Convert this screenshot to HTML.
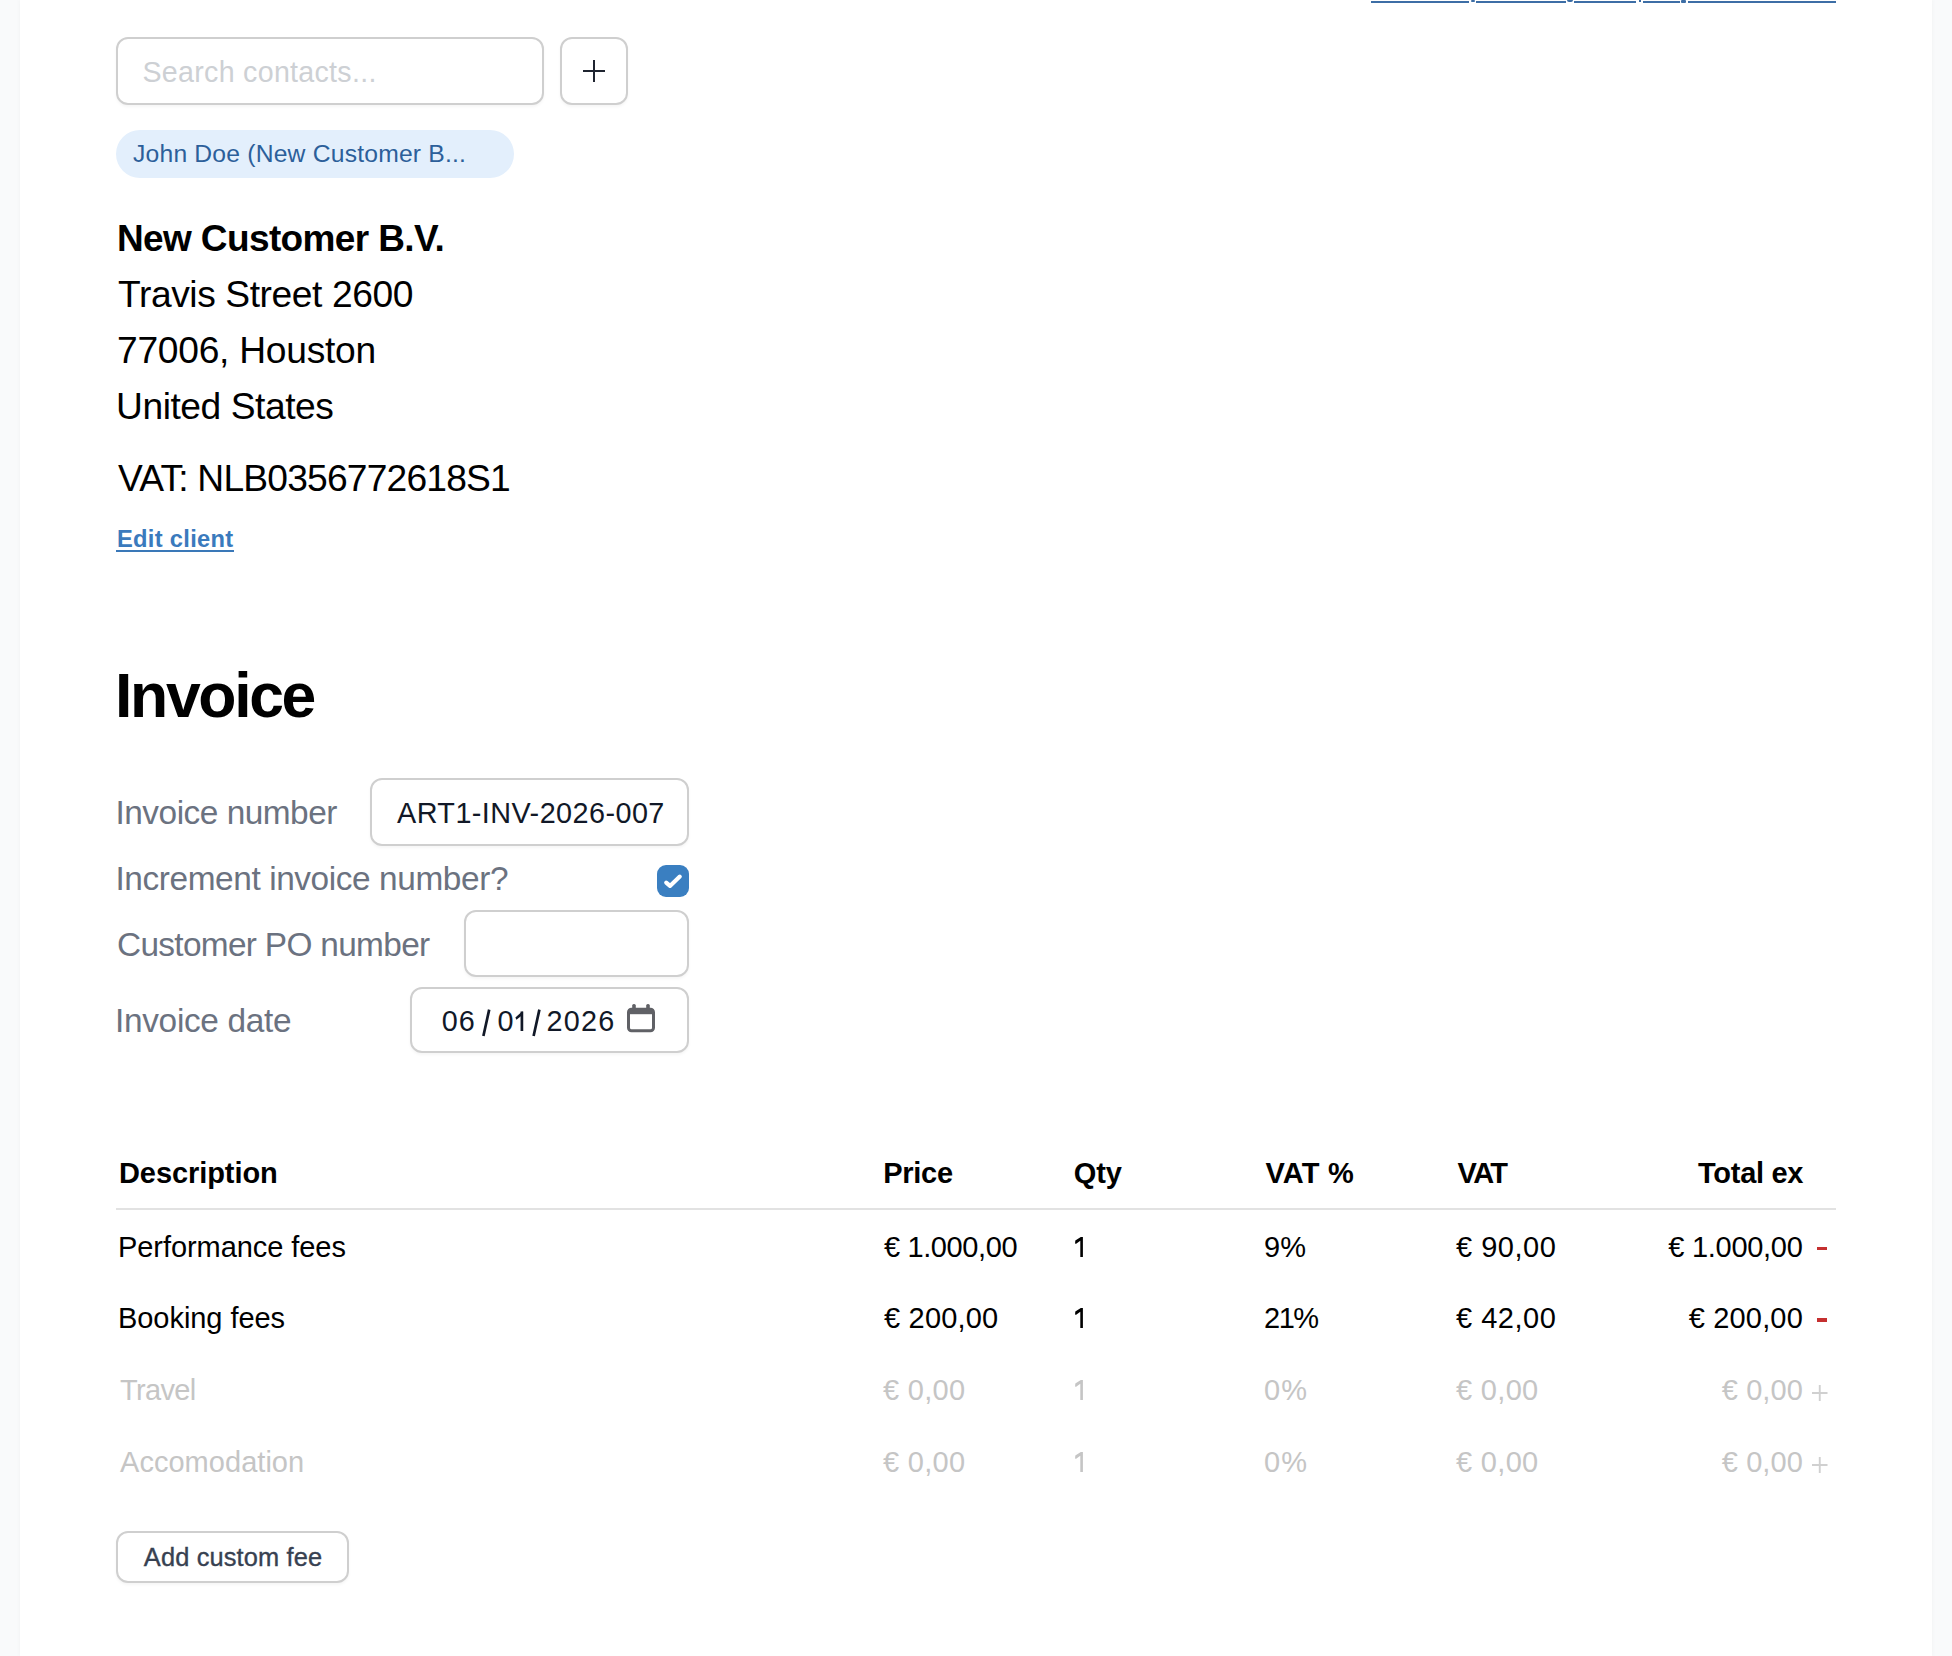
<!DOCTYPE html>
<html><head><meta charset="utf-8"><title>Invoice</title>
<style>
html,body{margin:0;padding:0;}
body{width:1952px;height:1656px;overflow:hidden;background:#f9fafb;position:relative;font-family:"Liberation Sans",sans-serif;}
.card{position:absolute;left:20px;top:0;width:1912px;height:1656px;background:#fff;box-shadow:0 0 5px rgba(0,0,0,0.04);}
.t{position:absolute;white-space:nowrap;}
.box{position:absolute;box-sizing:border-box;border:2px solid #cfcfcf;border-radius:12px;background:#fff;box-shadow:0 2px 3px rgba(0,0,0,0.04);}
.ul{position:absolute;height:2px;background:#3d6ea6;top:1px;}
</style></head><body>
<div class="card"></div>
<div class="ul" style="left:1371px;width:98px"></div>
<div class="ul" style="left:1476px;width:90px"></div>
<div class="ul" style="left:1574px;width:62px"></div>
<div class="ul" style="left:1643px;width:37px"></div>
<div class="ul" style="left:1688px;width:148px"></div>
<div class="ul" style="left:1471px;width:4px;top:0;height:2px;border-radius:1px"></div>
<div class="ul" style="left:1681px;width:5px;top:0;height:3px;border-radius:1px"></div>
<div class="ul" style="left:1567px;width:6px;top:0;height:1.6px;border-radius:0 0 3px 3px"></div>
<div class="ul" style="left:1638.5px;width:2.5px;top:0;height:1.6px"></div>

<div class="box" style="left:116px;top:37px;width:428px;height:68px"></div>
<div class="box" style="left:560px;top:37px;width:68px;height:68px"></div>
<svg style="position:absolute;left:580px;top:57px" width="28" height="28" viewBox="0 0 28 28"><path d="M3 14H25M14 3V25" stroke="#1f2430" stroke-width="2" fill="none"/></svg>
<div style="position:absolute;left:116px;top:130px;width:398px;height:48px;border-radius:24px;background:#e3effc"></div>

<div class="box" style="left:370px;top:778px;width:319px;height:68px"></div>
<div style="position:absolute;left:657px;top:865px;width:32px;height:32px;border-radius:9px;background:#3a7fc1"></div>
<svg style="position:absolute;left:657px;top:865px" width="32" height="32" viewBox="0 0 32 32"><path d="M9.2 17.6L13 20.9L22.8 11.6" stroke="#fff" stroke-width="4.1" fill="none" stroke-linecap="round" stroke-linejoin="round"/></svg>
<div class="box" style="left:464px;top:910px;width:225px;height:67px"></div>
<div class="box" style="left:410px;top:987px;width:279px;height:66px"></div>
<svg style="position:absolute;left:470px;top:1000px" width="80" height="40" viewBox="470 1000 80 40"><path d="M489.2 1009.6L483.4 1036M539.4 1009.6L533.6 1036" stroke="#111827" stroke-width="2.7" fill="none"/><path d="M521.9 1031V1011.5" stroke="#111827" stroke-width="2.7" fill="none"/><path d="M515.4 1017.4L522.4 1011.2L523 1014.6L516.4 1019.8Z" fill="#111827"/></svg>
<svg style="position:absolute;left:626px;top:1003px" width="30" height="30" viewBox="0 0 30 30">
<rect x="2.5" y="6.2" width="25" height="21.6" rx="3" fill="none" stroke="#606166" stroke-width="3"/>
<rect x="2.5" y="6.2" width="25" height="5" fill="#606166"/>
<rect x="6.2" y="1" width="3.6" height="6.5" rx="1.6" fill="#606166"/>
<rect x="20.2" y="1" width="3.6" height="6.5" rx="1.6" fill="#606166"/>
</svg>

<div style="position:absolute;left:116px;top:1208px;width:1720px;height:2px;background:#e2e2e2"></div>
<div style="position:absolute;left:1817px;top:1246.5px;width:9.5px;height:3.5px;background:#c53030"></div>
<div style="position:absolute;left:1817px;top:1318px;width:9.5px;height:3.5px;background:#c53030"></div>
<svg style="position:absolute;left:1811px;top:1384px" width="18" height="18" viewBox="0 0 18 18"><path d="M1 9H16.5M8.75 1V17" stroke="#d0d0d0" stroke-width="1.9" fill="none"/></svg>
<svg style="position:absolute;left:1811px;top:1456px" width="18" height="18" viewBox="0 0 18 18"><path d="M1 9H16.5M8.75 1V17" stroke="#d0d0d0" stroke-width="1.9" fill="none"/></svg>

<div class="box" style="left:116px;top:1531px;width:233px;height:52px"></div>
<div style="position:absolute;left:116px;top:550px;width:118px;height:2px;background:#3a78b8"></div>
<div class="t" id="search" style="top:58.09px;font-size:28.60px;line-height:28.60px;color:#cdd0d4;font-weight:400;letter-spacing:0.294px;left:142.50px;">Search contacts...</div>
<div class="t" id="chip" style="top:142.09px;font-size:24.70px;line-height:24.70px;color:#2c5f9a;font-weight:400;letter-spacing:0.192px;left:133.00px;">John Doe (New Customer B...</div>
<div class="t" id="name" style="top:219.68px;font-size:37.00px;line-height:37.00px;color:#000;font-weight:700;letter-spacing:-0.625px;left:117.00px;">New Customer B.V.</div>
<div class="t" id="addr1" style="top:275.51px;font-size:37.20px;line-height:37.20px;color:#000;font-weight:400;letter-spacing:-0.412px;left:118.00px;">Travis Street 2600</div>
<div class="t" id="addr2" style="top:331.51px;font-size:37.20px;line-height:37.20px;color:#000;font-weight:400;letter-spacing:-0.262px;left:117.00px;">77006, Houston</div>
<div class="t" id="addr3" style="top:387.51px;font-size:37.20px;line-height:37.20px;color:#000;font-weight:400;letter-spacing:-0.450px;left:116.00px;">United States</div>
<div class="t" id="vat" style="top:459.51px;font-size:37.20px;line-height:37.20px;color:#000;font-weight:400;letter-spacing:-0.800px;left:118.00px;">VAT: NLB0356772618S1</div>
<div class="t" id="edit" style="top:528.34px;font-size:23.70px;line-height:23.70px;color:#3a7abd;font-weight:700;letter-spacing:0.300px;left:117.00px;">Edit client</div>
<div class="t" id="inv" style="top:664.09px;font-size:62.50px;line-height:62.50px;color:#000;font-weight:700;letter-spacing:-2.333px;left:115.00px;">Invoice</div>
<div class="t" id="l1" style="top:795.73px;font-size:33.40px;line-height:33.40px;color:#6b7280;font-weight:400;letter-spacing:-0.492px;left:115.50px;">Invoice number</div>
<div class="t" id="l2" style="top:861.73px;font-size:33.40px;line-height:33.40px;color:#6b7280;font-weight:400;letter-spacing:-0.408px;left:115.50px;">Increment invoice number?</div>
<div class="t" id="l3" style="top:927.73px;font-size:33.40px;line-height:33.40px;color:#6b7280;font-weight:400;letter-spacing:-0.682px;left:117.00px;">Customer PO number</div>
<div class="t" id="l4" style="top:1003.73px;font-size:33.40px;line-height:33.40px;color:#6b7280;font-weight:400;letter-spacing:-0.309px;left:115.00px;">Invoice date</div>
<div class="t" id="invno" style="top:798.62px;font-size:28.80px;line-height:28.80px;color:#111827;font-weight:400;letter-spacing:0.438px;left:397.00px;">ART1-INV-2026-007</div>
<div class="t" id="d1" style="top:1006.62px;font-size:28.80px;line-height:28.80px;color:#111827;font-weight:400;letter-spacing:1.000px;left:441.80px;">06</div>
<div class="t" id="d2" style="top:1006.62px;font-size:28.80px;line-height:28.80px;color:#111827;font-weight:400;letter-spacing:0.000px;left:497.60px;">0</div>
<div class="t" id="d3" style="top:1006.62px;font-size:28.80px;line-height:28.80px;color:#111827;font-weight:400;letter-spacing:1.200px;left:546.60px;">2026</div>
<div class="t" id="h_desc" style="top:1159.45px;font-size:29.00px;line-height:29.00px;color:#000;font-weight:700;letter-spacing:-0.080px;left:119.00px;">Description</div>
<div class="t" id="h_price" style="top:1159.45px;font-size:29.00px;line-height:29.00px;color:#000;font-weight:700;letter-spacing:-0.250px;left:883.20px;">Price</div>
<div class="t" id="h_qty" style="top:1159.45px;font-size:29.00px;line-height:29.00px;color:#000;font-weight:700;letter-spacing:-0.100px;left:1073.80px;">Qty</div>
<div class="t" id="h_vatp" style="top:1159.45px;font-size:29.00px;line-height:29.00px;color:#000;font-weight:700;letter-spacing:0.200px;left:1265.40px;">VAT %</div>
<div class="t" id="h_vat" style="top:1159.45px;font-size:29.00px;line-height:29.00px;color:#000;font-weight:700;letter-spacing:-1.600px;left:1457.60px;">VAT</div>
<div class="t" id="h_tot" style="top:1159.45px;font-size:29.00px;line-height:29.00px;color:#000;font-weight:700;letter-spacing:-0.286px;right:148.50px;margin-right:0.286px;">Total ex</div>
<div class="t" id="r0_desc" style="top:1233.05px;font-size:29.00px;line-height:29.00px;color:#000;font-weight:400;letter-spacing:-0.067px;left:118.00px;">Performance fees</div>
<div class="t" id="r0_price" style="top:1233.05px;font-size:29.00px;line-height:29.00px;color:#000;font-weight:400;letter-spacing:-0.400px;left:884.10px;">€ 1.000,00</div>
<div class="t" id="r0_vatp" style="top:1233.05px;font-size:29.00px;line-height:29.00px;color:#000;font-weight:400;letter-spacing:0.000px;left:1264.00px;">9%</div>
<div class="t" id="r0_vat" style="top:1233.05px;font-size:29.00px;line-height:29.00px;color:#000;font-weight:400;letter-spacing:0.500px;left:1456.00px;">€ 90,00</div>
<div class="t" id="r0_tot" style="top:1233.05px;font-size:29.00px;line-height:29.00px;color:#000;font-weight:400;letter-spacing:-0.289px;right:149.20px;margin-right:0.289px;">€ 1.000,00</div>
<div class="t" id="r1_desc" style="top:1304.45px;font-size:29.00px;line-height:29.00px;color:#000;font-weight:400;letter-spacing:-0.055px;left:118.00px;">Booking fees</div>
<div class="t" id="r1_price" style="top:1304.45px;font-size:29.00px;line-height:29.00px;color:#000;font-weight:400;letter-spacing:0.171px;left:884.10px;">€ 200,00</div>
<div class="t" id="r1_vatp" style="top:1304.45px;font-size:29.00px;line-height:29.00px;color:#000;font-weight:400;letter-spacing:-1.500px;left:1264.00px;">21%</div>
<div class="t" id="r1_vat" style="top:1304.45px;font-size:29.00px;line-height:29.00px;color:#000;font-weight:400;letter-spacing:0.500px;left:1456.00px;">€ 42,00</div>
<div class="t" id="r1_tot" style="top:1304.45px;font-size:29.00px;line-height:29.00px;color:#000;font-weight:400;letter-spacing:0.171px;right:149.20px;margin-right:-0.171px;">€ 200,00</div>
<div class="t" id="r2_desc" style="top:1376.45px;font-size:29.00px;line-height:29.00px;color:#c5c5c5;font-weight:400;letter-spacing:-0.640px;left:120.00px;">Travel</div>
<div class="t" id="r2_price" style="top:1376.45px;font-size:29.00px;line-height:29.00px;color:#c5c5c5;font-weight:400;letter-spacing:0.280px;left:883.10px;">€ 0,00</div>
<div class="t" id="r2_vatp" style="top:1376.45px;font-size:29.00px;line-height:29.00px;color:#c5c5c5;font-weight:400;letter-spacing:1.000px;left:1264.00px;">0%</div>
<div class="t" id="r2_vat" style="top:1376.45px;font-size:29.00px;line-height:29.00px;color:#c5c5c5;font-weight:400;letter-spacing:0.320px;left:1456.00px;">€ 0,00</div>
<div class="t" id="r2_tot" style="top:1376.45px;font-size:29.00px;line-height:29.00px;color:#c5c5c5;font-weight:400;letter-spacing:0.080px;right:149.20px;margin-right:-0.080px;">€ 0,00</div>
<div class="t" id="r3_desc" style="top:1448.45px;font-size:29.00px;line-height:29.00px;color:#c5c5c5;font-weight:400;letter-spacing:0.036px;left:120.00px;">Accomodation</div>
<div class="t" id="r3_price" style="top:1448.45px;font-size:29.00px;line-height:29.00px;color:#c5c5c5;font-weight:400;letter-spacing:0.280px;left:883.10px;">€ 0,00</div>
<div class="t" id="r3_vatp" style="top:1448.45px;font-size:29.00px;line-height:29.00px;color:#c5c5c5;font-weight:400;letter-spacing:1.000px;left:1264.00px;">0%</div>
<div class="t" id="r3_vat" style="top:1448.45px;font-size:29.00px;line-height:29.00px;color:#c5c5c5;font-weight:400;letter-spacing:0.320px;left:1456.00px;">€ 0,00</div>
<div class="t" id="r3_tot" style="top:1448.45px;font-size:29.00px;line-height:29.00px;color:#c5c5c5;font-weight:400;letter-spacing:0.080px;right:149.20px;margin-right:-0.080px;">€ 0,00</div>
<div class="t" id="btn" style="top:1544.70px;font-size:25.40px;line-height:25.40px;color:#374151;font-weight:400;letter-spacing:0.154px;-webkit-text-stroke:0.35px #374151;left:143.80px;">Add custom fee</div>
<svg style="position:absolute;left:1070px;top:1232.60px" width="20" height="26" viewBox="0 0 20 26"><path d="M5.3 7.6L10.8 4H12.9V24H10.3V7.8L5.8 10.9L5.1 10.3Z" fill="#000"/></svg>
<svg style="position:absolute;left:1070px;top:1304.00px" width="20" height="26" viewBox="0 0 20 26"><path d="M5.3 7.6L10.8 4H12.9V24H10.3V7.8L5.8 10.9L5.1 10.3Z" fill="#000"/></svg>
<svg style="position:absolute;left:1070px;top:1376.00px" width="20" height="26" viewBox="0 0 20 26"><path d="M5.3 7.6L10.8 4H12.9V24H10.3V7.8L5.8 10.9L5.1 10.3Z" fill="#c5c5c5"/></svg>
<svg style="position:absolute;left:1070px;top:1448.00px" width="20" height="26" viewBox="0 0 20 26"><path d="M5.3 7.6L10.8 4H12.9V24H10.3V7.8L5.8 10.9L5.1 10.3Z" fill="#c5c5c5"/></svg>
</body></html>
